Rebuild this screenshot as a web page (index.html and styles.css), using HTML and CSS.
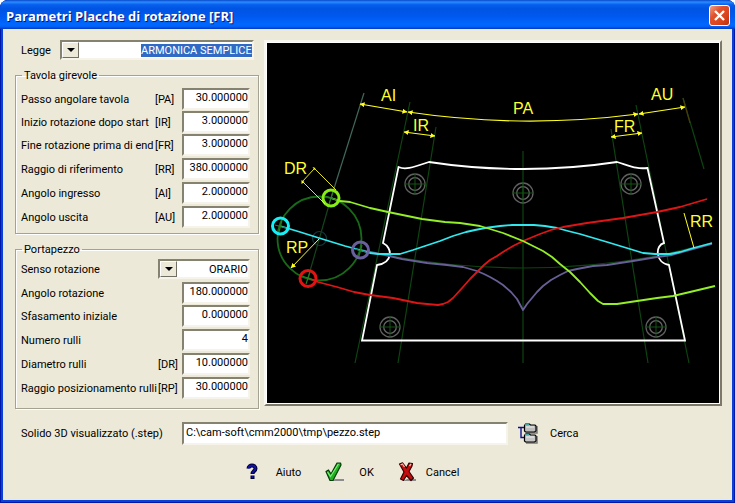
FILE: index.html
```html
<!DOCTYPE html>
<html lang="it">
<head>
<meta charset="utf-8">
<title>Parametri Placche di rotazione [FR]</title>
<link rel="stylesheet" href="styles.css">
</head>
<body>
<div class="window">
  <header class="titlebar">
    <h1 class="title">Parametri Placche di rotazione [FR]</h1>
    <button class="close" type="button" aria-label="Chiudi">
      <svg viewBox="0 0 19 19" width="19" height="19" aria-hidden="true"><path d="M5 5l9 9M14 5l-9 9" stroke="#fff" stroke-width="2.4"/></svg>
    </button>
  </header>

  <form class="content">
    <div class="main">
      <div class="params">
        <div class="law">
          <label for="legge">Legge</label>
          <div class="combo">
            <span class="arrow"></span>
            <select id="legge" class="selected"><option>ARMONICA SEMPLICE</option></select>
          </div>
        </div>

        <fieldset class="group group-table">
          <legend>Tavola girevole</legend>
          <div class="rows">
            <div class="row"><label for="pa">Passo angolare tavola</label><span class="code">[PA]</span><input id="pa" value="30.000000"></div>
            <div class="row"><label for="ir">Inizio rotazione dopo start</label><span class="code">[IR]</span><input id="ir" value="3.000000"></div>
            <div class="row"><label for="fr">Fine rotazione prima di end</label><span class="code">[FR]</span><input id="fr" value="3.000000"></div>
            <div class="row"><label for="rr">Raggio di riferimento</label><span class="code">[RR]</span><input id="rr" value="380.000000"></div>
            <div class="row"><label for="ai">Angolo ingresso</label><span class="code">[AI]</span><input id="ai" value="2.000000"></div>
            <div class="row"><label for="au">Angolo uscita</label><span class="code">[AU]</span><input id="au" value="2.000000"></div>
          </div>
        </fieldset>

        <fieldset class="group group-holder">
          <legend>Portapezzo</legend>
          <div class="rows">
            <div class="row row-combo"><label for="senso">Senso rotazione</label>
              <div class="combo">
                <span class="arrow"></span>
                <select id="senso"><option>ORARIO</option></select>
              </div>
            </div>
            <div class="row"><label for="ar">Angolo rotazione</label><span class="code"></span><input id="ar" value="180.000000"></div>
            <div class="row"><label for="si">Sfasamento iniziale</label><span class="code"></span><input id="si" value="0.000000"></div>
            <div class="row"><label for="nr">Numero rulli</label><span class="code"></span><input id="nr" value="4"></div>
            <div class="row"><label for="dr">Diametro rulli</label><span class="code">[DR]</span><input id="dr" value="10.000000"></div>
            <div class="row"><label for="rp">Raggio posizionamento rulli</label><span class="code">[RP]</span><input id="rp" value="30.000000"></div>
          </div>
        </fieldset>
      </div>

      <div class="view">
        <svg class="drawing" viewBox="267 43 452 360" role="img" aria-label="Schema placche di rotazione">
          <defs>
            <marker id="tip" viewBox="0 0 6 6" refX="5.5" refY="3" markerWidth="5" markerHeight="5" markerUnits="userSpaceOnUse" orient="auto-start-reverse"><path d="M0 0L6 3L0 6z" fill="#ffff20" stroke="none"/></marker>
            <g id="target">
              <circle r="10" fill="none" stroke="#606060" stroke-width="1.3"/>
              <circle r="6.3" fill="none" stroke="#686868" stroke-width="1.3"/>
              <path d="M-11 0H11M0-11V11" stroke="#145214"/>
            </g>
          </defs>
          <rect x="267" y="43" width="452" height="360" fill="#000"/>

          <g fill="none" stroke="#0d4410" stroke-width="1.2">
            <path d="M410 102L355 363M436 127L398 363M523 151V363M611 129L648 363M636 105L689 363"/>
            <path d="M683 98L704 169"/>
            <path d="M390 256Q457 268 523 268T657 256L712 243"/>
          </g>
          <path d="M683 98L690 123" stroke="#4a3c0a" stroke-width="1.2"/>
          <path d="M364 93L331 198" stroke="#42685a" stroke-width="1.2"/>
          <path d="M331 198L308 278" stroke="#15451a" stroke-width="1.2"/>

          <use href="#target" x="415" y="184"/>
          <use href="#target" x="523" y="193"/>
          <use href="#target" x="631" y="184"/>
          <use href="#target" x="390" y="327"/>
          <use href="#target" x="656" y="327"/>

          <circle cx="319.500" cy="238.500" r="42" fill="none" stroke="#176b17" stroke-width="1.8"/>
          <circle cx="319.500" cy="238.500" r="7" fill="none" stroke="#12383a" stroke-width="1.2"/>

          <path d="M398.500 167C405 170 411 168 429 162Q475 169 523 169T617 162C633 167 636 169 647.500 168L664 243C655 245 655 263 669 265L685 340.500H362L377 265C393 263 393 248 383 243Z" fill="none" stroke="#fff" stroke-width="1.8"/>

          <g fill="none" stroke-width="1.8" stroke-linejoin="round">
            <polyline stroke="#685f96" points="360,250 385,255 402,259 427,263 447,265 463,267 470,269 477,271 484,274 490,277 497,281 503,285 511,292 517,299 523,310 527,304 532,298 537,292 543,286 551,280 560,275 568,271 577,269 593,266 607,265 633,261 657,257 672,255 690,250 712,244"/>
            <polyline stroke="#30e8ee" points="280,226 300,232 319,238 345,246 360,250 370,253 378,254 400,254 413,250 440,241 453,236 466,232 475,230 485,228 500,226 512,225 534,225 545,226 557,228 568,231 580,234 607,242 630,249 643,253 655,254 670,254 680,252 690,249 712,243"/>
            <polyline stroke="#df1515" points="308,278 318,282 337,287 354,292 370,295 393,298 417,303 427,304 438,305 443,304 448,302 453,298 463,287 470,279 477,272 484,265 490,260 497,256 503,252 513,246 523,241 540,234 551,230 563,227 587,223 623,218 657,212 680,207 707,199"/>
            <polyline stroke="#94ee28" points="331,198 340,201 350,202 370,208 388,212 422,219 445,222 460,223 480,226 490,229 503,233 523,241 533,246 543,251 552,257 560,264 570,272 575,277 580,282 590,293 598,301 603,304 608,304 617,304 637,301 657,298 673,296 690,292 715,286"/>
          </g>

          <g fill="none" stroke-width="3">
            <circle cx="331" cy="198" r="8" stroke="#86ee16"/>
            <circle cx="280.500" cy="226" r="8" stroke="#18eef5"/>
            <circle cx="360.500" cy="250" r="8" stroke="#685f9c"/>
            <circle cx="308" cy="278.500" r="8" stroke="#e51212"/>
          </g>
          <path d="M325 196L337 200M333 192L329 204M275 225L286 228M282 220L279 232M355 249L366 252M362 245L359 256M302 276L314 280M310 272L306 284" stroke="#237d23" stroke-width="1.2"/>

          <g fill="none" stroke="#ffff20" stroke-width="1.2">
            <g marker-start="url(#tip)" marker-end="url(#tip)">
              <path d="M360 104L407 112"/>
              <path d="M408 112Q523 129 638 114"/>
              <path d="M639 114L685 107"/>
              <path d="M404 132L435 136"/>
              <path d="M611 137L642 133"/>
            </g>
            <path d="M314 169L302 182M314 168L336 190M303 182L325 204" stroke-width="0.9"/>
            <path d="M684 213L694 248M319 239L291 268" stroke-width="1" marker-end="url(#tip)"/>
          </g>
          <path d="M312.500 167l3 1-1 2zM301.500 180l3 2-3 2z" fill="#ffff20"/>

          <g class="dims">
            <text x="381" y="101">AI</text>
            <text x="413" y="131">IR</text>
            <text x="513" y="114">PA</text>
            <text x="614" y="132">FR</text>
            <text x="651" y="100">AU</text>
            <text x="284" y="174">DR</text>
            <text x="286" y="253">RP</text>
            <text x="690" y="227">RR</text>
          </g>
        </svg>
      </div>
    </div>

    <div class="file">
      <label for="solido">Solido 3D visualizzato (.step)</label>
      <input id="solido" value="C:\cam-soft\cmm2000\tmp\pezzo.step">
      <button class="command command-browse" type="button">
        <svg viewBox="0 0 20 21" width="20" height="21" aria-hidden="true">
          <path d="M0 4.500H6M3 4.500V14.500H7" fill="none" stroke="#10108c" stroke-width="1.400"/>
          <path d="M8 10h11V3M8 20h11v-7" fill="none" stroke="#777" stroke-width="1.500"/>
          <path d="M6.500 2.500l1-1.500h4l1 1H17l1 1v5l-1.500 1H7.500l-1-1z" fill="#bdbdbd" stroke="#000" stroke-width="1.200"/>
          <path d="M6.500 12.500l1-1.500h4l1 1H17l1 1v5l-1.500 1H7.500l-1-1z" fill="#c6c6c6" stroke="#000" stroke-width="1.200"/>
          <path d="M7 2h4M7 12h4" stroke="#48bcbc" stroke-width="1.400"/>
          <path d="M8 4h8M8 14h8" stroke="#eee"/>
        </svg>
        <span>Cerca</span>
      </button>
    </div>

    <div class="actions">
      <button class="command" type="button">
        <svg viewBox="0 0 20 20" width="20" height="20" aria-hidden="true">
          <path d="M6.500 6.500C6.500 2.500 13.500 2.500 13.500 6.500C13.500 9 10.500 9 10.500 12M10.500 13.500V17" fill="none" stroke="#000030" stroke-width="4"/>
          <path d="M6.500 6.500C6.500 2.500 13.500 2.500 13.500 6.500C13.500 9 10.500 9 10.500 11.500M10.500 14V16" fill="none" stroke="#1212a8" stroke-width="1.800"/>
        </svg>
        <span>Aiuto</span>
      </button>
      <button class="command" type="button">
        <svg viewBox="0 0 20 20" width="20" height="20" aria-hidden="true">
          <path d="M10 17h9v2H7z" fill="#8c8c8c"/>
          <path d="M1 9.500L3.500 8L6 12L12 1L15.500 1L16 3L8 18.500H5z" fill="#22b022" stroke="#063c06" stroke-width="1.200" stroke-linejoin="round"/>
          <path d="M2.500 10L5.500 14.500L13.500 2" fill="none" stroke="#7cf07c" stroke-width="1.200"/>
        </svg>
        <span>OK</span>
      </button>
      <button class="command command-cancel" type="button">
        <svg viewBox="0 0 20 20" width="20" height="20" aria-hidden="true">
          <path d="M9 17h9v2H5z" fill="#8c8c8c"/>
          <path d="M1.500 2L4.500.800L8.500 6L11 1L14.500 1.500L14 4L11 9.500L15.500 16L13 18.500L8.500 13.500L5.500 18.500L2.500 17L6 10z" fill="#c50d0d" stroke="#300" stroke-width="1.200" stroke-linejoin="round"/>
          <path d="M2.500 3l2-1 2 3M11.500 4l1.500-2" fill="none" stroke="#ffb0a8" stroke-width="1.300"/>
        </svg>
        <span>Cancel</span>
      </button>
    </div>
  </form>
</div>
</body>
</html>
```
FILE: styles.css
```css
* {
  box-sizing: border-box;
}

body {
  margin: 0;
  background: #fff;
  color: #000;
  font: 11px/13px Roboto, "Liberation Sans", Arial, sans-serif;
}

input,
select,
button {
  margin: 0;
  font: inherit;
  color: inherit;
  border-radius: 0;
}

.window {
  display: flex;
  flex-direction: column;
  min-height: 100vh;
  border-radius: 8px 8px 0 0;
  background: #ece9d8;
  box-shadow: inset 0 0 0 1px #0018a8, inset 0 0 0 3px #0a3fd8;
  overflow: hidden;
}

.titlebar {
  display: flex;
  align-items: center;
  justify-content: space-between;
  height: 29px;
  padding: 2px 5px 0 6px;
  background: linear-gradient(#0848c8 0, #2a8cff 7%, #0860ee 16%, #0054e3 30%, #0058ee 55%, #0068ff 85%, #0060f4 92%, #0038c0 100%);
}

.title {
  margin: 0;
  color: #fff;
  font: bold 13px/18px "Open Sans", "Noto Sans", sans-serif;
  text-shadow: 1px 1px #0a1883;
}

.close {
  display: grid;
  place-items: center;
  width: 21px;
  height: 21px;
  padding: 0;
  border: 1px solid #fff;
  border-radius: 3px;
  background: linear-gradient(135deg, #f0a088, #e0512c 35%, #d8431c 70%, #b83010);
}

.content {
  flex: 1;
  padding: 11px 13px 20px 15px;
}

.main {
  display: grid;
  grid-template-columns: 244px minmax(0, 1fr);
  align-items: start;
  gap: 5px;
}

.params {
  display: flex;
  flex-direction: column;
  gap: 9px;
}

.law {
  display: grid;
  grid-template-columns: 39px 1fr;
  align-items: center;
  padding: 0 5px 0 6px;
}

input,
.combo {
  border: 2px solid;
  border-color: #85826f #f6f4ea #f6f4ea #85826f;
  background: #fff;
}

input {
  width: 100%;
  height: 22px;
  padding: 0 0 3px;
  outline: none;
}

.combo {
  display: flex;
  align-items: center;
  height: 20px;
}

.arrow {
  display: grid;
  place-items: center;
  width: 17px;
  height: 16px;
  border: 1px solid;
  border-color: #fff #716f64 #716f64 #fff;
  background: #ece9d8;
}

.arrow::before {
  content: "";
  border: 4px solid transparent;
  border-top-color: #000;
  border-bottom: 0;
}

select {
  margin-left: auto;
  padding: 0;
  border: 0;
  background: none;
  appearance: none;
  outline: none;
}

.selected {
  background: #316ac5;
  color: #fff;
}

.group {
  min-width: 0;
  margin: 0;
  border: 1px solid #a5a291;
  box-shadow: 1px 1px #fff, inset 1px 1px #fff;
}

.group-table {
  padding: 6px 8px 3px 5px;
}

.group-holder {
  padding: 3px 8px 7px 5px;
}

legend {
  margin-left: 1px;
  padding: 0 2px;
}

.rows {
  display: grid;
  grid-template-rows: repeat(2, 23px) repeat(4, 24px);
}

.row {
  display: grid;
  grid-template-columns: minmax(0, 1fr) 24px 68px;
  align-items: center;
  align-content: start;
}

.row-combo {
  grid-template-columns: 1fr 92px;
}

.row label {
  white-space: nowrap;
}

.row input {
  text-align: right;
}

.group-table .row {
  grid-template-columns: minmax(0, 1fr) 27px 68px;
}

.view {
  padding: 1px;
  border: 2px solid;
  border-color: #f8f7f0 #7c796a #7c796a #f8f7f0;
  background: #fff;
}

.drawing {
  display: block;
  width: 100%;
  height: auto;
}

.dims {
  fill: #ffff30;
  font-family: "Liberation Sans", Arial, sans-serif;
  font-size: 16px;
}

.file {
  display: grid;
  grid-template-columns: 161px minmax(0, 1fr) 214px;
  align-items: center;
  margin-top: 13px;
  padding-left: 6px;
}

.file input {
  height: 23px;
  padding-left: 2px;
}

.command {
  display: flex;
  align-items: center;
  gap: 14px;
  padding: 0;
  border: 0;
  background: none;
}

.command-browse {
  gap: 12px;
  padding-left: 10px;
}

.command-cancel {
  gap: 8px;
}

.actions {
  display: flex;
  justify-content: center;
  gap: 24px;
  margin-top: 17px;
  padding-right: 36px;
}
```
